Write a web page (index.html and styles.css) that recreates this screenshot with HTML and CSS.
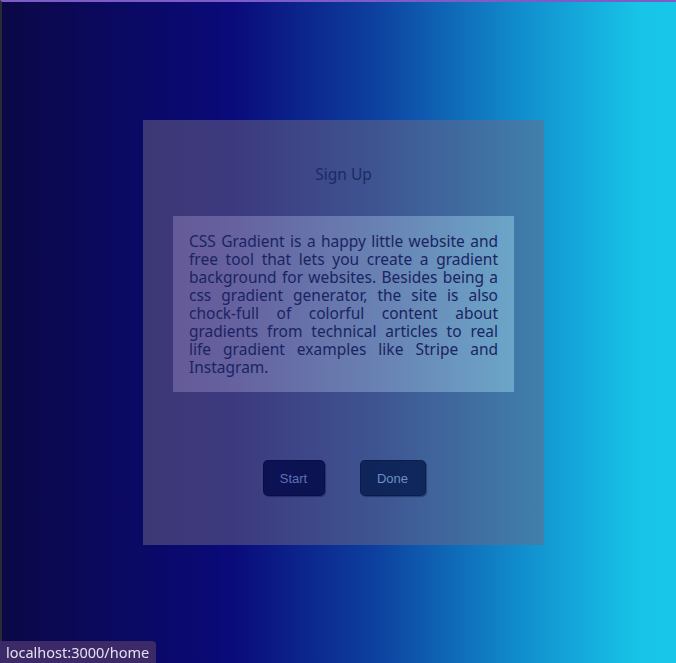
FILE: index.html
```html
<!DOCTYPE html>
<html lang="en">
<head>
<meta charset="utf-8">
<title>Sign Up</title>
<link rel="stylesheet" href="styles.css">
</head>
<body>
<div class="page">
  <section class="panel">
    <h2 class="title">Sign Up</h2>
    <p class="blurb">CSS Gradient is a happy little website and free tool that lets you create a gradient background for websites. Besides being a css gradient generator, the site is also chock-full of colorful content about gradients from technical articles to real life gradient examples like Stripe and Instagram.</p>
    <div class="actions">
      <button class="btn btn-start" type="button">Start</button>
      <button class="btn btn-done" type="button">Done</button>
    </div>
  </section>
</div>
<div class="status">localhost:3000/home</div>
</body>
</html>
```

FILE: styles.css
```css
html, body {
  margin: 0;
  padding: 0;
  height: 100%;
}
body {
  font-family: "Noto Sans", "Open Sans", sans-serif;
  background: #0b0846;
  overflow: hidden;
}
.page {
  box-sizing: border-box;
  height: 663px;
  border-left: 2px solid #2b2b35;
  border-top: 2px solid #7c5cc6;
  padding: 118px 0 0 141px;
  background: linear-gradient(90deg, #0b0846 0%, #0a0a7a 34%, #0d3f9e 55%, #1191cf 78%, #18c5e8 95%, #18c6e9 100%);
}
.panel {
  box-sizing: border-box;
  width: 401px;
  height: 425px;
  padding: 44px 30px 49px;
  background: rgba(112, 104, 132, 0.5);
  display: flex;
  flex-direction: column;
}
.title {
  margin: 0 0 32px;
  height: 20px;
  line-height: 20px;
  font-size: 15.5px;
  font-weight: normal;
  text-align: center;
  color: #1b2b64;
}
.blurb {
  margin: 0;
  box-sizing: border-box;
  width: 341px;
  padding: 16px;
  font-size: 15.5px;
  line-height: 18px;
  text-align: justify;
  color: #1a2462;
  background: linear-gradient(90deg, rgba(150, 130, 190, 0.45), rgba(160, 220, 240, 0.45));
}
.actions {
  margin-top: 68px;
  display: flex;
  justify-content: center;
  gap: 35px;
  padding-left: 1px;
}
.btn {
  box-sizing: border-box;
  height: 36px;
  padding: 0 16px;
  border: 1px solid rgba(0, 0, 30, 0.25);
  border-radius: 5px;
  box-shadow: 1px 1px 1px rgba(0, 0, 40, 0.35);
  font-family: "Liberation Sans", Arial, sans-serif;
  font-size: 13px;
  cursor: pointer;
}
.btn-start {
  width: 62px;
  background: rgba(0, 6, 70, 0.8);
  color: #5b72b2;
}
.btn-done {
  width: 66px;
  background: rgba(0, 22, 72, 0.75);
  color: #6a8fc2;
}
.status {
  position: fixed;
  left: 0;
  bottom: 0;
  height: 22px;
  line-height: 22px;
  padding: 0 7px 0 6px;
  background: #3b2968;
  color: #e4e2f0;
  font-family: "Noto Sans", "Open Sans", sans-serif;
  font-size: 14.5px;
  border-top-right-radius: 4px;
}
```
